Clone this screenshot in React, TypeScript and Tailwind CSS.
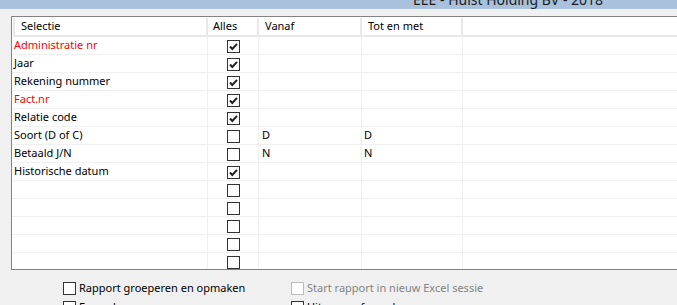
import React from 'react';

type Row = {
  label: string;
  red?: boolean;
  checked: boolean;
  from?: string;
  to?: string;
};

const rows: Row[] = [
  { label: 'Administratie nr', red: true, checked: true },
  { label: 'Jaar', checked: true },
  { label: 'Rekening nummer', checked: true },
  { label: 'Fact.nr', red: true, checked: true },
  { label: 'Relatie code', checked: true },
  { label: 'Soort (D of C)', checked: false, from: 'D', to: 'D' },
  { label: 'Betaald J/N', checked: false, from: 'N', to: 'N' },
  { label: 'Historische datum', checked: true },
  { label: '', checked: false },
  { label: '', checked: false },
  { label: '', checked: false },
  { label: '', checked: false },
  { label: '', checked: false },
];

function Check({ checked, disabled }: { checked: boolean; disabled?: boolean }) {
  return (
    <span
      className={`flex h-[13px] w-[13px] shrink-0 items-center justify-center border bg-white ${
        disabled ? 'border-[#bcbcbc]' : 'border-[#333333]'
      }`}
    >
      {checked && (
        <svg width="11" height="11" viewBox="0 0 11 11">
          <path d="M2 5.5 L4.3 8 L9 2.8" fill="none" stroke="#222" strokeWidth="2" />
        </svg>
      )}
    </span>
  );
}

const cols = 'grid grid-cols-[196px_51px_103px_101px_1fr]';

export default function App() {
  return (
    <div
      className="h-[305px] w-[677px] overflow-hidden bg-[#f0f0f0] text-[11px] text-black"
      style={{ fontFamily: '"Noto Sans", "Open Sans", sans-serif' }}
    >
      {/* Title bar, cut off at the top */}
      <div className="flex h-[9px] items-end overflow-hidden bg-[#a9c1db]">
        <span className="mb-[2px] ml-[413px] whitespace-nowrap text-[14px] leading-[14px] text-[#1a1a1a]">
          EEE - Hulst Holding BV - 2018
        </span>
      </div>

      {/* Grid */}
      <div className="ml-[11px] mt-[7px] h-[254px] w-[700px] overflow-hidden border border-r-0 border-[#828282] bg-white">
        <div className={`${cols} h-[20px] pt-[1px]`}>
          {['Selectie', 'Alles', 'Vanaf', 'Tot en met', ''].map((h, i) => (
            <div
              key={i}
              className={`flex items-center border-b-2 border-r-2 border-[#e8e8e8] bg-white ${
                i === 0 ? 'ml-[1px] border-l-2 pl-[6px]' : i === 1 ? 'pl-[5px]' : 'pl-[6px]'
              } ${i === 4 ? 'border-r-0' : ''}`}
            >
              {h}
            </div>
          ))}
        </div>
        <div className="h-[232px] overflow-hidden">
          {rows.map((r, i) => (
            <div key={i} className={`${cols} h-[18px]`}>
              <div
                className={`flex items-center border-b border-r border-[#f0f0f0] pl-[2px] ${
                  r.red ? 'text-[#ff0000]' : ''
                }`}
              >
                {r.label}
              </div>
              <div className="flex items-center justify-center border-b border-r border-[#f0f0f0] pt-[2px]">
                <Check checked={r.checked} />
              </div>
              <div className="flex items-center border-b border-r border-[#f0f0f0] pl-[3px]">
                {r.from}
              </div>
              <div className="flex items-center border-b border-r border-[#f0f0f0] pl-[2px]">
                {r.to}
              </div>
              <div className="border-b border-[#f0f0f0]" />
            </div>
          ))}
        </div>
      </div>

      {/* Options */}
      <div className="ml-[63px] mt-[12px] grid grid-cols-[228px_1fr] gap-y-[6px]">
        <label className="flex h-[13px] items-center gap-[3px]">
          <Check checked={false} />
          <span>Rapport groeperen en opmaken</span>
        </label>
        <label className="flex h-[13px] items-center gap-[3px] text-[#838383]">
          <Check checked={false} disabled />
          <span>Start rapport in nieuw Excel sessie</span>
        </label>
        <label className="flex h-[13px] items-center gap-[3px]">
          <Check checked={false} />
          <span>Formule</span>
        </label>
        <label className="flex h-[13px] items-center gap-[3px]">
          <Check checked={false} />
          <span>Uitvoeren formules</span>
        </label>
      </div>
    </div>
  );
}
